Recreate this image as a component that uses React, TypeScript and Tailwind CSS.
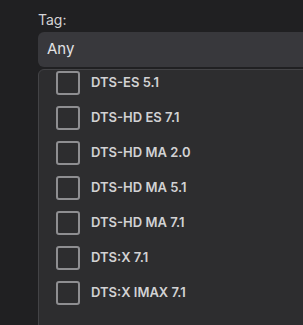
import React from "react";

const items = [
  "DTS-ES 5.1",
  "DTS-HD ES 7.1",
  "DTS-HD MA 2.0",
  "DTS-HD MA 5.1",
  "DTS-HD MA 7.1",
  "DTS:X 7.1",
  "DTS:X IMAX 7.1",
];

export default function App() {
  return (
    <div
      className="w-[303px] h-[325px] overflow-hidden bg-[#202022] pl-[38px] pt-[11px]"
      style={{ fontFamily: "Inter, 'Noto Sans', sans-serif" }}
    >
      <div className="w-[320px]">
        <div className="text-[14px] leading-[18px] text-[#d4d4d6]">Tag:</div>
        <div className="mt-[3px] h-[35px] rounded-[6px] bg-[#38383c] pl-[9px] flex items-center text-[15px] text-[#e2e2e4]">
          Any
        </div>
        <div className="mt-[2px] h-[300px] overflow-hidden rounded-t-[6px] border border-[#434346] bg-[#2d2d2f]">
          <div className="-mt-[5px]">
            {items.map((t) => (
              <div key={t} className="flex items-center h-[35px] pl-[17px]">
                <div className="w-[24px] h-[24px] rounded-[3px] border-2 border-[#8e8e91]" />
                <span className="ml-[11px] text-[13px] font-semibold text-[#d2d2d4]">{t}</span>
              </div>
            ))}
          </div>
        </div>
      </div>
    </div>
  );
}
